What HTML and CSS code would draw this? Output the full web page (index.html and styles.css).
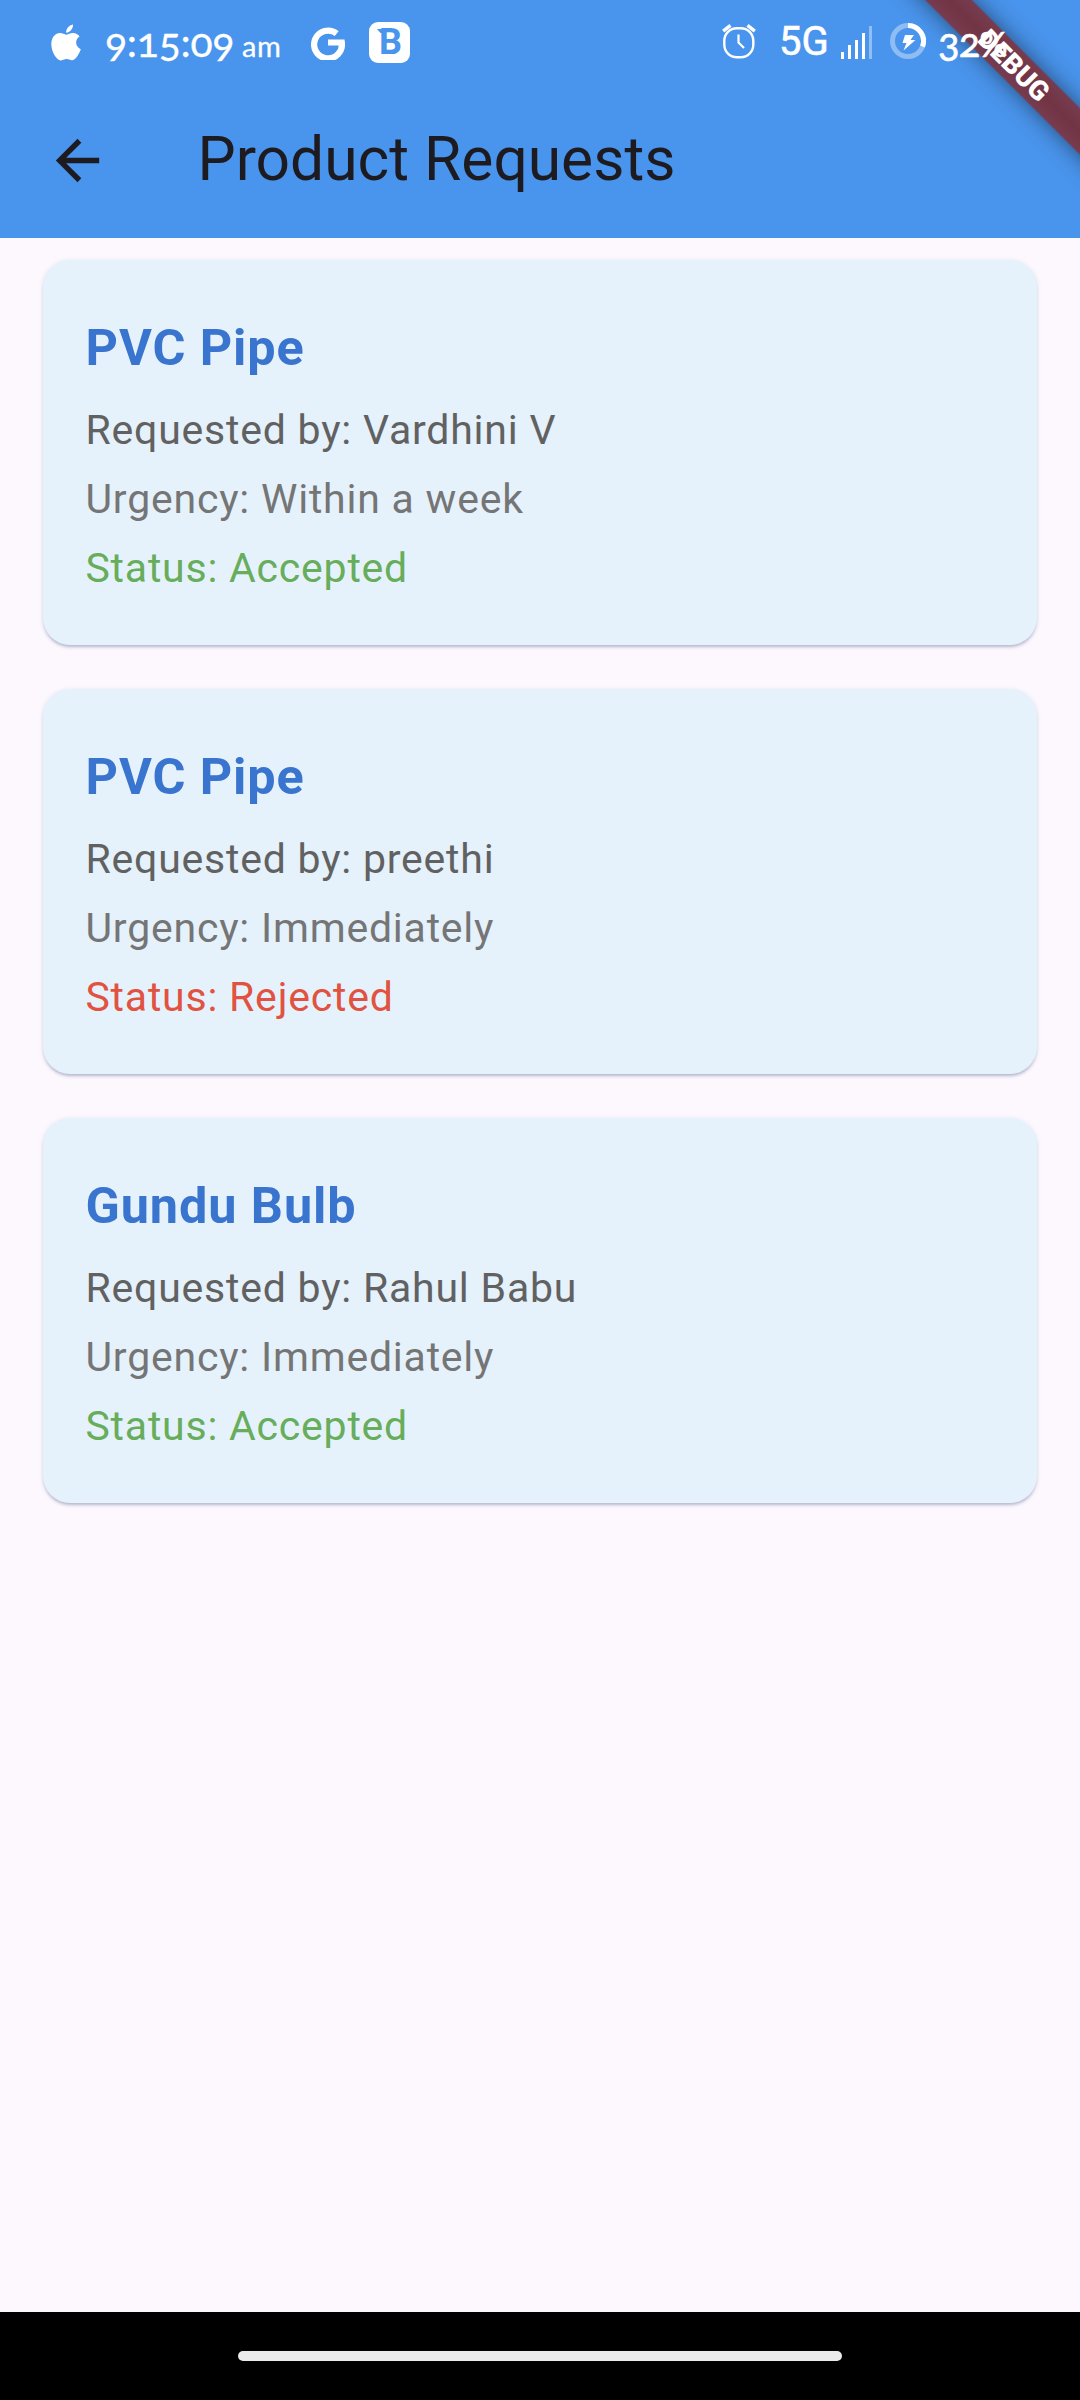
FILE: index.html
```html
<!DOCTYPE html>
<html lang="en">
<head>
<meta charset="utf-8">
<title>Product Requests</title>
<link rel="stylesheet" href="styles.css">
</head>
<body>
<div class="screen">
  <header class="app-header">
    <div class="status-bar">
      <svg class="apple" viewBox="0 0 30 37" width="30" height="37"><path fill="#fff" d="M22 .4C22.300 4 19.500 8.300 15.200 8.700C14.700 5 18 1.100 22 .4ZM28.600 12.600C23.500 15.800 24.200 22.800 29.800 25.300C28.300 29.900 24.800 35.700 21.400 36.200C19.200 36.500 18.100 35.100 15.600 35.100C13.100 35.100 11.800 36.500 9.800 36.400C5.200 36.200 .3 27.500 .3 20.300C.3 13.300 4.500 9.200 9 9.100C11.500 9.100 13.700 10.700 15.100 10.700C16.600 10.700 19.300 8.800 22.300 9C24.500 9.100 27 10.200 28.600 12.600Z"/></svg>
      <div class="clock">9:15:09<span class="meridiem">am</span></div>
      <svg class="google" viewBox="0 0 34 35" width="34" height="35"><path fill="none" stroke="#fff" stroke-width="6.200" d="M25.700 8.600A13.900 13.900 0 1 0 30.800 17.500H17"/></svg>
      <div class="b-tile">B</div>
      <div class="status-right">
        <svg class="alarm" viewBox="0 0 34 35" width="34" height="35" fill="none" stroke="#fff"><rect x="2.300" y="4.300" width="29" height="29" rx="12.500" stroke-width="2.400"/><path stroke-width="3.400" d="M1.200 7.200L8.500 1.400M25.500 1.400L32.800 7.200"/><path stroke-width="2.200" d="M16.500 10.500V18.500L22 24"/></svg>
        <div class="network">5G</div>
        <svg class="signal" viewBox="0 0 31 33" width="31" height="33" fill="#fff"><path d="M0 26h3v7H0zM7 19h3v14H7zM14 14h3v19h-3zM21 7h3v26h-3z"/><path opacity=".4" d="M28 0h3v33h-3z"/></svg>
        <svg class="battery" viewBox="0 0 36 36" width="36" height="36"><circle cx="18" cy="18" r="15.500" fill="none" stroke="#fff" stroke-opacity=".38" stroke-width="5"/><path fill="none" stroke="#fff" stroke-width="5" d="M18 2.500A15.500 15.500 0 0 1 32.500 23.500"/><path fill="#fff" d="M15 12H24L20.500 17H25.500L13.500 27.500L16.500 20H12.500Z"/></svg>
        <div class="percent">32<span class="percent-sign">%</span></div>
      </div>
    </div>
    <div class="toolbar">
      <svg class="back" viewBox="0 0 24 24" width="65" height="65"><path fill="#1d1b20" d="M20 11H7.830l5.590-5.590L12 4l-8 8 8 8 1.410-1.410L7.830 13H20v-2z"/></svg>
      <h1 class="heading">Product Requests</h1>
    </div>
  </header>
  <div class="debug-corner"><div class="debug-band">DEBUG</div></div>
  <main class="requests">
    <article class="card">
      <h2 class="product">PVC Pipe</h2>
      <p class="line requester">Requested by: Vardhini V</p>
      <p class="line urgency">Urgency: Within a week</p>
      <p class="line accepted">Status: Accepted</p>
    </article>
    <article class="card">
      <h2 class="product">PVC Pipe</h2>
      <p class="line requester">Requested by: preethi</p>
      <p class="line urgency">Urgency: Immediately</p>
      <p class="line rejected">Status: Rejected</p>
    </article>
    <article class="card">
      <h2 class="product">Gundu Bulb</h2>
      <p class="line requester">Requested by: Rahul Babu</p>
      <p class="line urgency">Urgency: Immediately</p>
      <p class="line accepted">Status: Accepted</p>
    </article>
  </main>
  <footer class="nav-bar"><div class="handle"></div></footer>
</div>
</body>
</html>
```
FILE: styles.css
```css
* { box-sizing: border-box; }
body, h1, h2, p { margin: 0; }
body { font-family: Roboto, sans-serif; background: #fcf8fe; }
.screen {
  position: relative;
  display: flex;
  flex-direction: column;
  width: 1080px;
  height: 2400px;
  overflow: hidden;
}
.app-header { height: 238px; background: #4994ec; }
.status-bar {
  display: flex;
  align-items: flex-start;
  height: 84px;
  padding-left: 51px;
  color: #fff;
}
.status-bar svg { display: block; flex: none; }
.apple { margin-top: 24px; }
.clock {
  width: 200px;
  margin: 18px 0 0 24px;
  font: 41px/48px Lato, sans-serif;
  font-feature-settings: "onum" 1;
  letter-spacing: -.300px;
  -webkit-text-stroke: .3px #fff;
  white-space: nowrap;
}
.meridiem { margin-left: 8px; font-size: 29px; letter-spacing: .5px; }
.google { margin: 25px 0 0 6px; }
.b-tile {
  position: relative;
  width: 41px;
  height: 41px;
  margin: 22px 0 0 24px;
  padding-left: 2px;
  border-radius: 9px;
  background: #fff;
  color: #4994ec;
  font: bold 36px/41px Roboto, sans-serif;
  text-align: center;
}
.b-tile::before {
  content: "";
  position: absolute;
  left: 8px;
  top: 7px;
  width: 7px;
  height: 4px;
  background: #4994ec;
  clip-path: polygon(0 0, 100% 0, 100% 100%, 50% 100%);
}
.status-right {
  position: relative;
  z-index: 2;
  display: flex;
  align-items: flex-start;
  margin-left: 312px;
}
.alarm { margin-top: 24px; }
.network {
  width: 51px;
  margin: 19px 0 0 23px;
  font: 400 40px/46px Roboto, sans-serif;
  -webkit-text-stroke: .6px #fff;
}
.signal { margin: 26px 0 0 11px; }
.battery { margin: 23px 0 0 18px; }
.percent {
  margin: 18px 0 0 12px;
  font: 40px/48px Lato, sans-serif;
  font-feature-settings: "onum" 1;
  letter-spacing: -.800px;
  -webkit-text-stroke: .6px #fff;
}
.percent-sign { font-size: 35px; }
.toolbar { display: flex; align-items: center; height: 154px; padding-left: 44.500px; }
.back { margin-bottom: 1px; }
.heading {
  margin-left: 88px;
  padding-bottom: 3px;
  font-size: 60.500px;
  font-weight: 400;
  line-height: 80px;
  color: #1d1b20;
  white-space: nowrap;
}
.debug-corner {
  position: absolute;
  z-index: 1;
  top: 0;
  right: 0;
  width: 238px;
  height: 238px;
  overflow: hidden;
}
.debug-band {
  position: absolute;
  left: 22px;
  top: 49px;
  width: 300px;
  height: 33px;
  transform: rotate(45deg);
  background: linear-gradient(#783c50, #703444 50%, #783c50);
  box-shadow: 0 0 22px rgba(0, 0, 0, .5);
  color: #fff;
  font-size: 27.500px;
  font-weight: 900;
  line-height: 33px;
  text-align: center;
}
.requests {
  display: flex;
  flex: 1;
  flex-direction: column;
  gap: 43.500px;
  padding: 21.500px 43px;
}
.card {
  height: 385.500px;
  padding: 54px 42.500px 0;
  border-radius: 27px;
  background: #e5f2fc;
  box-shadow: 0 3px 3px -1px rgba(70, 80, 130, .3), 0 1px 5px rgba(70, 80, 130, .14);
}
.product {
  height: 82px;
  font-size: 50.400px;
  font-weight: 700;
  line-height: 67px;
  letter-spacing: .900px;
  color: #3975ce;
}
.line { font-size: 41px; line-height: 69px; letter-spacing: .780px; }
.requester { color: #616161; }
.urgency { color: #757575; }
.accepted { color: #67ad5b; }
.rejected { color: #e15241; }
.nav-bar {
  display: flex;
  justify-content: center;
  height: 88px;
  padding-top: 39px;
  background: #000;
}
.handle { width: 604px; height: 10px; border-radius: 5px; background: #ebebeb; }
```
